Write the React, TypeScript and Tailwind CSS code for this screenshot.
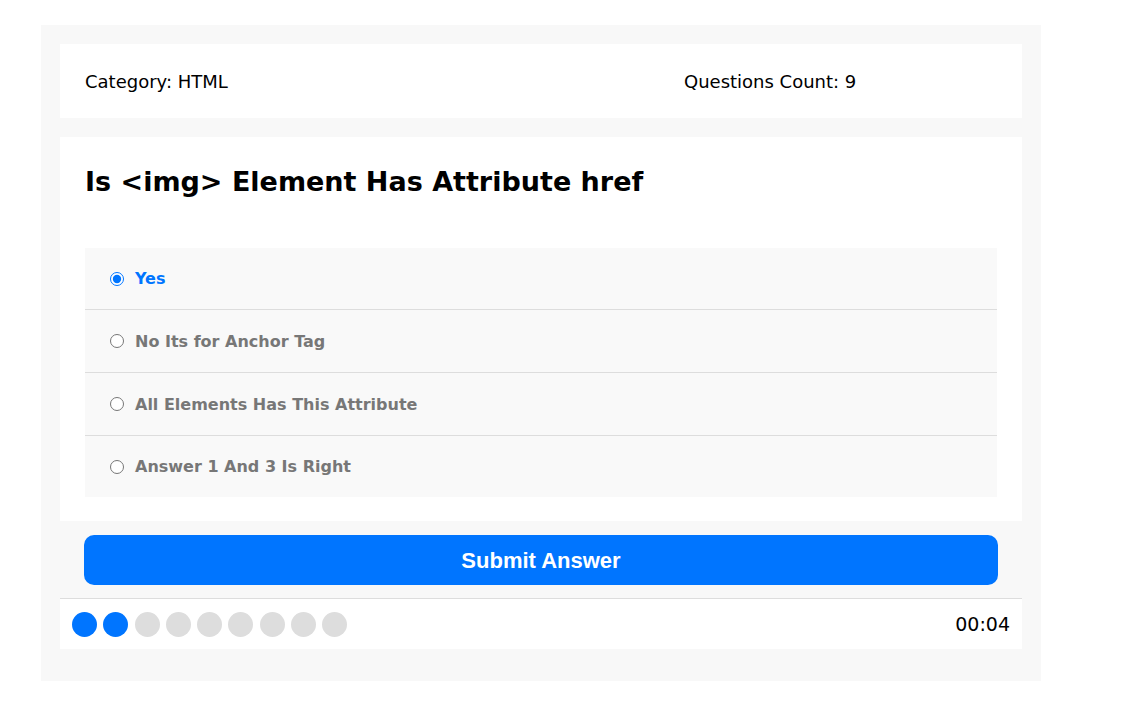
import React, { useState } from 'react';

const ANSWERS = [
  'Yes',
  'No Its for Anchor Tag',
  'All Elements Has This Attribute',
  'Answer 1 And 3 Is Right',
];

const ROW_HEIGHTS = ['h-[62px]', 'h-[63px]', 'h-[63px]', 'h-[61px]'];

const TOTAL = 9;
const DONE = 2;

export default function App() {
  const [picked, setPicked] = useState(0);

  return (
    <div className="min-h-screen bg-white pt-[25px] pl-[41px] font-['DejaVu_Sans',Tahoma,sans-serif]">
      <div className="w-[1000px] bg-[#f8f8f8] px-[19px] pt-[19px] pb-[32px]">
        {/* Info */}
        <div className="flex h-[74px] items-center bg-white px-[25px] text-[18px] text-black">
          <span className="w-[599px]">Category: HTML</span>
          <span>Questions Count: 9</span>
        </div>

        {/* Quiz area */}
        <div className="mt-[19px] bg-white px-[25px] pt-[27px] pb-[24px]">
          <h2 className="text-[27px] font-bold leading-[36px] text-black">
            Is &lt;img&gt; Element Has Attribute href
          </h2>
          <div className="mt-[48px] bg-[#f9f9f9]">
            {ANSWERS.map((a, i) => (
              <label
                key={a}
                className={`flex items-center gap-[11px] pl-[25px] ${ROW_HEIGHTS[i]} ${
                  i < ANSWERS.length - 1 ? 'border-b border-[#dddddd]' : ''
                }`}
              >
                <input
                  type="radio"
                  name="question"
                  checked={picked === i}
                  onChange={() => setPicked(i)}
                  className="m-0 h-[14px] w-[14px]"
                />
                <span
                  className={`pt-[1px] text-[16px] font-bold ${
                    picked === i ? 'text-[#0075ff]' : 'text-[#777777]'
                  }`}
                >
                  {a}
                </span>
              </label>
            ))}
          </div>
        </div>

        <div className="px-[24px] pt-[14px] pb-[13px]">
          <button className="h-[50px] w-full rounded-[10px] bg-[#0075ff] font-['Liberation_Sans',Arial,sans-serif] text-[22px] font-bold text-white">
            Submit Answer
          </button>
        </div>

        {/* Bullets + timer */}
        <div className="flex h-[51px] items-center justify-between border-t border-[#dddddd] bg-white pl-[12px] pr-[12px]">
          <div className="flex gap-[6.25px]">
            {Array.from({ length: TOTAL }).map((_, i) => (
              <span
                key={i}
                className={`h-[25px] w-[25px] rounded-full ${
                  i < DONE ? 'bg-[#0075ff]' : 'bg-[#dddddd]'
                }`}
              />
            ))}
          </div>
          <span className="text-[19px] text-black">00:04</span>
        </div>
      </div>
    </div>
  );
}
